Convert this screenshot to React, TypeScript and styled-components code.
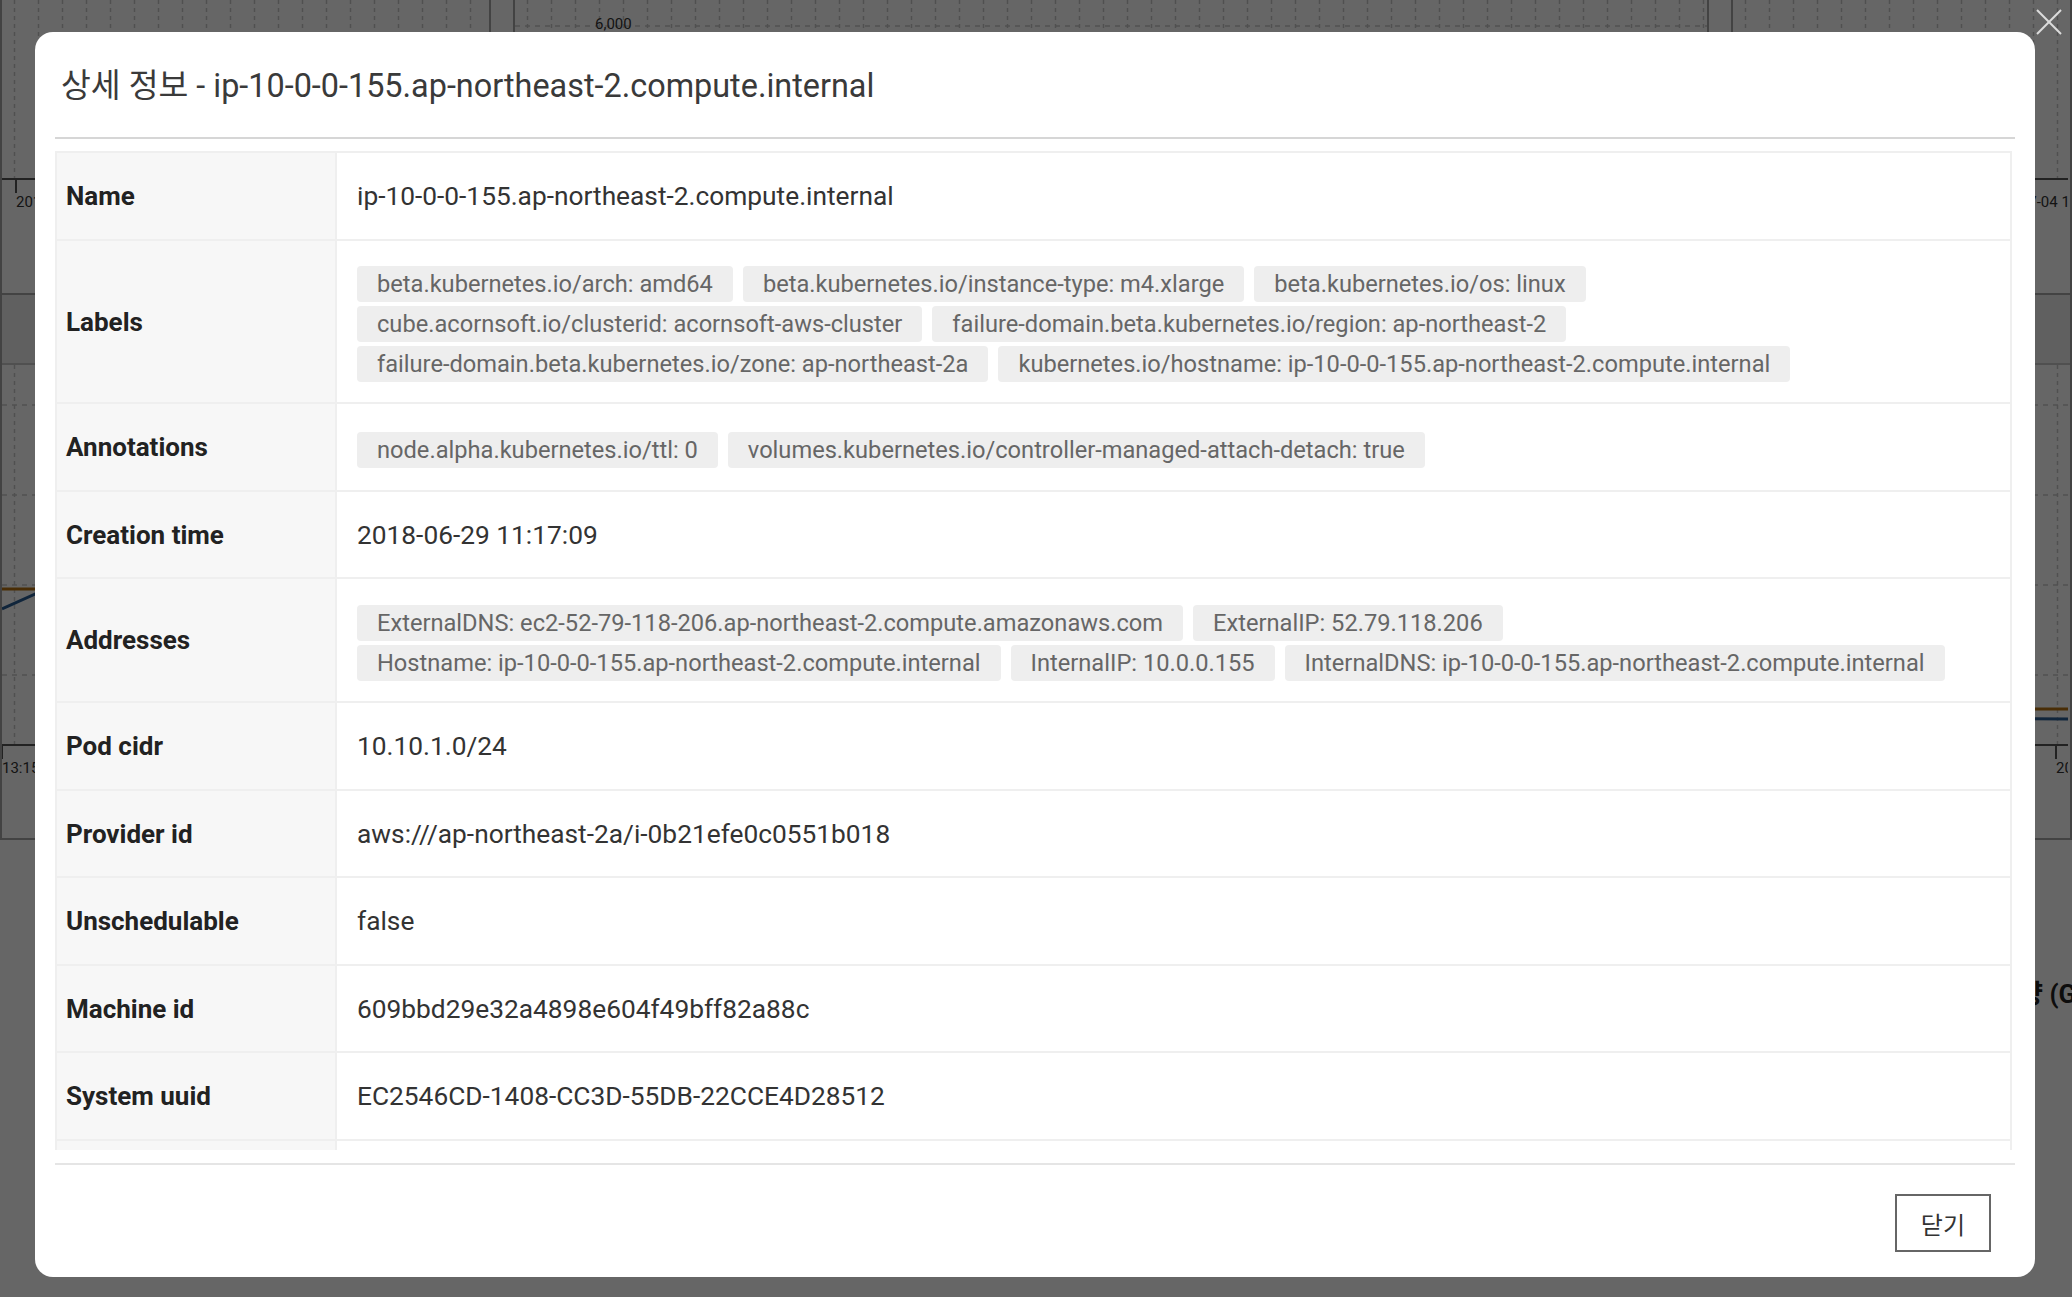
import React from "react";
import styled, { createGlobalStyle } from "styled-components";

const GlobalStyle = createGlobalStyle`
  html, body { margin: 0; padding: 0; }
  body {
    font-family: Roboto, "Noto Sans CJK KR", "Noto Sans", sans-serif;
    background: #ffffff;
    color: #333333;
    overflow: hidden;
  }
  * { box-sizing: border-box; }
`;

/* ---------- dimmed dashboard behind the modal ---------- */

const Dashboard = styled.div`
  width: 2072px;
  height: 1297px;
  overflow: hidden;
  background: #ffffff;
  display: flex;
  flex-direction: column;
`;

const PanelRow = styled.div<{ $h: number; $plain?: boolean }>`
  display: grid;
  grid-template-columns: 491px 1196px 1fr;
  column-gap: 22px;
  height: ${(p) => p.$h}px;
  border-bottom: ${(p) => (p.$plain ? "none" : "2px solid #a8a8a8")};
`;

const Panel = styled.div<{ $plain?: boolean }>`
  background: #ffffff;
  border-left: ${(p) => (p.$plain ? "none" : "2px solid #a8a8a8")};
  border-right: ${(p) => (p.$plain ? "none" : "2px solid #a8a8a8")};
  overflow: hidden;
`;

const PanelBand = styled.div`
  height: 70px;
  background: #f0f0f0;
  border-bottom: 2px solid #c8c8c8;
`;

const PanelTitle = styled.div<{ $indent: number; $top: number }>`
  height: 70px;
  margin-top: ${(p) => p.$top}px;
  display: flex;
  align-items: center;
  padding-left: ${(p) => p.$indent}px;
  font-size: 26px;
  font-weight: 700;
  color: #222;
  white-space: nowrap;
`;

type Line = { color: string; points: string };

function Chart({
  id,
  w,
  h,
  axisY,
  ticks,
  yLabel,
  lines = [],
  hLines = [],
}: {
  id: string;
  w: number;
  h: number;
  axisY: number;
  ticks: { x: number; t: string }[];
  yLabel?: { x: number; y: number; t: string };
  lines?: Line[];
  hLines?: number[];
}) {
  return (
    <svg width={w} height={h} style={{ display: "block" }}>
      <defs>
        <pattern id={`grid-${id}`} width="24" height="8" patternUnits="userSpaceOnUse">
          <line x1="12.5" y1="0" x2="12.5" y2="4" stroke="#c9c9c9" strokeWidth="1.5" />
        </pattern>
      </defs>
      <rect x="0" y="0" width={w} height={axisY} fill={`url(#grid-${id})`} />
      {hLines.map((y) => (
        <line key={y} x1="0" x2={w} y1={y} y2={y} stroke="#c9c9c9" strokeWidth="1.5" strokeDasharray="5 5" />
      ))}
      {lines.map((l, i) => (
        <polyline key={i} points={l.points} fill="none" stroke={l.color} strokeWidth="3" />
      ))}
      <line x1="0" x2={w} y1={axisY} y2={axisY} stroke="#555" strokeWidth="2" />
      {ticks.map((t, i) => (
        <g key={i}>
          <line x1={t.x} x2={t.x} y1={axisY} y2={axisY + 14} stroke="#555" strokeWidth="2" />
          <text x={t.x} y={axisY + 28} fontSize="15" fill="#333" fontFamily="Roboto, sans-serif">
            {t.t}
          </text>
        </g>
      ))}
      {yLabel && (
        <text x={yLabel.x} y={yLabel.y} fontSize="15" fill="#333" fontFamily="Roboto, sans-serif">
          {yLabel.t}
        </text>
      )}
    </svg>
  );
}

/* ---------- overlay + modal ---------- */

const Overlay = styled.div`
  position: fixed;
  inset: 0;
  background: rgba(0, 0, 0, 0.6);
  padding: 32px 37px 20px 35px;
`;

const CloseX = styled.button`
  position: absolute;
  top: 9px;
  right: 10px;
  width: 26px;
  height: 26px;
  padding: 0;
  border: 0;
  background: none;
  cursor: pointer;
`;

const Modal = styled.div`
  position: relative;
  width: 2000px;
  height: 1245px;
  background: #ffffff;
  border-radius: 18px;
  display: flex;
  flex-direction: column;
  padding: 0 20px;
`;

const Header = styled.div`
  padding: 32px 0 29px 6px;
  border-bottom: 2px solid #d6d6d6;
`;

const Title = styled.h2`
  margin: 0;
  font-size: 32.4px;
  line-height: 44px;
  font-weight: 400;
  color: #3a3a3a;
`;

const ScrollArea = styled.div`
  margin: 12px 3px 0 0;
  height: 999px;
  flex: none;
  overflow-y: auto;
  scrollbar-width: none;
  &::-webkit-scrollbar { display: none; }
`;

const InfoTable = styled.div`
  border: 2px solid #efefef;
  border-bottom: none;
`;

const Row = styled.div`
  display: grid;
  grid-template-columns: 280px 1fr;
  border-bottom: 2px solid #efefef;
`;

const LabelCell = styled.div`
  background: #f7f7f7;
  border-right: 2px solid #efefef;
  padding: 23px 9px 22.6px;
  display: flex;
  align-items: center;
  font-size: 26px;
  line-height: 40px;
  font-weight: 700;
  color: #222222;
`;

const ValueCell = styled.div<{ $tags?: boolean }>`
  padding: ${(p) => (p.$tags ? "25.5px 20px 20.1px" : "23px 20px 22.6px")};
  display: flex;
  align-items: center;
  min-height: 40px;
  font-size: 26.3px;
  line-height: 40px;
  color: #333333;
`;

const TagList = styled.div`
  display: flex;
  flex-wrap: wrap;
  align-items: center;
  align-content: center;
  gap: 4px 10px;
  min-height: 40px;
`;

const Tag = styled.span`
  display: inline-block;
  height: 36px;
  line-height: 36px;
  padding: 0 20px;
  border-radius: 4px;
  background: #eeeeee;
  color: #666666;
  font-size: 23.65px;
  white-space: nowrap;
`;

const Footer = styled.div`
  margin-top: 13px;
  border-top: 2px solid #e5e5e5;
  padding: 29px 24px 25px 0;
  display: flex;
  justify-content: flex-end;
`;

const CloseButton = styled.button`
  height: 58px;
  padding: 0 24px;
  border: 2px solid #666666;
  border-radius: 0;
  background: #ffffff;
  font-family: Roboto, "Noto Sans CJK KR", sans-serif;
  font-size: 24px;
  color: #333333;
  cursor: pointer;
`;

type Item = { label: string; text?: string; tags?: string[] };

const HOST = "ip-10-0-0-155.ap-northeast-2.compute.internal";

const items: Item[] = [
  { label: "Name", text: HOST },
  {
    label: "Labels",
    tags: [
      "beta.kubernetes.io/arch: amd64",
      "beta.kubernetes.io/instance-type: m4.xlarge",
      "beta.kubernetes.io/os: linux",
      "cube.acornsoft.io/clusterid: acornsoft-aws-cluster",
      "failure-domain.beta.kubernetes.io/region: ap-northeast-2",
      "failure-domain.beta.kubernetes.io/zone: ap-northeast-2a",
      `kubernetes.io/hostname: ${HOST}`,
    ],
  },
  {
    label: "Annotations",
    tags: [
      "node.alpha.kubernetes.io/ttl: 0",
      "volumes.kubernetes.io/controller-managed-attach-detach: true",
    ],
  },
  { label: "Creation time", text: "2018-06-29 11:17:09" },
  {
    label: "Addresses",
    tags: [
      "ExternalDNS: ec2-52-79-118-206.ap-northeast-2.compute.amazonaws.com",
      "ExternalIP: 52.79.118.206",
      `Hostname: ${HOST}`,
      "InternalIP: 10.0.0.155",
      `InternalDNS: ${HOST}`,
    ],
  },
  { label: "Pod cidr", text: "10.10.1.0/24" },
  { label: "Provider id", text: "aws:///ap-northeast-2a/i-0b21efe0c0551b018" },
  { label: "Unschedulable", text: "false" },
  { label: "Machine id", text: "609bbd29e32a4898e604f49bff82a88c" },
  { label: "System uuid", text: "EC2546CD-1408-CC3D-55DB-22CCE4D28512" },
  { label: "Boot id", text: "5f3c1f0e-8d2a-4c1b-9a7e-2b6f0d3e9c41" },
  { label: "Kernel version", text: "4.4.0-1060-aws" },
  { label: "OS image", text: "Ubuntu 16.04.4 LTS" },
  { label: "Container runtime", text: "docker://17.3.2" },
  { label: "Kubelet version", text: "v1.10.3" },
  { label: "Kube-proxy version", text: "v1.10.3" },
];

export default function App() {
  return (
    <>
      <GlobalStyle />
      <Dashboard>
        <PanelRow $h={295}>
          <Panel>
            <Chart id="a1" w={487} h={293} axisY={179} ticks={[{ x: 14, t: "2018-07-04 13:05" }, { x: 260, t: "13:10" }]} />
          </Panel>
          <Panel>
            <Chart
              id="a2"
              w={1192}
              h={293}
              axisY={179}
              hLines={[26]}
              yLabel={{ x: 80, y: 29, t: "6,000" }}
              ticks={[{ x: 60, t: "13:05" }, { x: 600, t: "13:10" }]}
            />
          </Panel>
          <Panel>
            <Chart id="a3" w={335} h={293} axisY={179} ticks={[{ x: 249, t: "2018-07-04 13:15" }]} />
          </Panel>
        </PanelRow>
        <PanelRow $h={545}>
          <Panel>
            <PanelBand />
            <Chart
              id="b1"
              w={487}
              h={470}
              axisY={380}
              hLines={[40, 130, 220, 310]}
              ticks={[{ x: 0, t: "13:15" }, { x: 240, t: "13:20" }]}
              lines={[
                { color: "#b7720f", points: "0,224 487,224" },
                { color: "#2a5d94", points: "0,244 40,226 487,204" },
              ]}
            />
          </Panel>
          <Panel>
            <PanelBand />
            <Chart id="b2" w={1192} h={470} axisY={380} hLines={[40, 130, 220, 310]} ticks={[{ x: 20, t: "13:15" }]} />
          </Panel>
          <Panel>
            <PanelBand />
            <Chart
              id="b3"
              w={335}
              h={470}
              axisY={380}
              hLines={[40, 130, 220, 310]}
              ticks={[{ x: 323, t: "2018" }]}
              lines={[
                { color: "#b7720f", points: "0,344 335,344" },
                { color: "#2a5d94", points: "0,352 335,354" },
              ]}
            />
          </Panel>
        </PanelRow>
        <PanelRow $h={457} $plain>
          <Panel $plain />
          <Panel $plain />
          <Panel $plain>
            <PanelTitle $indent={162} $top={116}>메모리 사용량 (GB)</PanelTitle>
          </Panel>
        </PanelRow>
      </Dashboard>

      <Overlay>
        <CloseX aria-label="닫기">
          <svg width="26" height="26" viewBox="0 0 26 26">
            <line x1="1" y1="1" x2="25" y2="25" stroke="#dcdcdc" strokeWidth="2" />
            <line x1="25" y1="1" x2="1" y2="25" stroke="#dcdcdc" strokeWidth="2" />
          </svg>
        </CloseX>
        <Modal>
          <Header>
            <Title>상세 정보 - {HOST}</Title>
          </Header>
          <ScrollArea>
            <InfoTable>
              {items.map((it) => (
                <Row key={it.label}>
                  <LabelCell>{it.label}</LabelCell>
                  <ValueCell $tags={!!it.tags}>
                    {it.tags ? (
                      <TagList>
                        {it.tags.map((t) => (
                          <Tag key={t}>{t}</Tag>
                        ))}
                      </TagList>
                    ) : (
                      it.text
                    )}
                  </ValueCell>
                </Row>
              ))}
            </InfoTable>
          </ScrollArea>
          <Footer>
            <CloseButton>닫기</CloseButton>
          </Footer>
        </Modal>
      </Overlay>
    </>
  );
}
